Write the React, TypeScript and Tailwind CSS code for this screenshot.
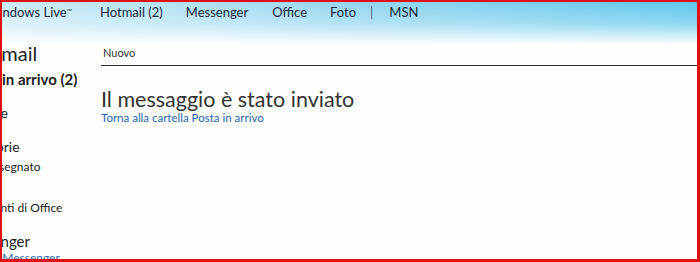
const font = { fontFamily: 'Lato, "Noto Sans", Arial, sans-serif' };

const nav = [
  { label: "Hotmail (2)", gap: "mr-[23px]" },
  { label: "Messenger", gap: "mr-[24px]" },
  { label: "Office", gap: "mr-[23px]" },
  { label: "Foto", gap: "mr-[14px]" },
];

function SideItem({
  text,
  shift,
  className,
}: {
  text: string;
  shift: string;
  className: string;
}) {
  return (
    <div className={`whitespace-nowrap ${shift} ${className}`}>{text}</div>
  );
}

export default function App() {
  return (
    <div
      className="relative h-[262px] w-[700px] overflow-hidden border-b-[3px] border-l-2 border-r-[3px] border-t-2 border-[#e01010] bg-[#fefefe] text-[#222]"
      style={font}
    >
      {/* sky band behind the top bar */}
      <div className="absolute inset-x-0 top-0 h-[48px] bg-[linear-gradient(to_right,#b4e2f6_0%,#9fd9f2_40%,#7ccfee_75%,#5ec6ec_100%)]" />
      <div className="absolute inset-x-0 top-0 h-[48px] bg-[linear-gradient(to_right,rgba(255,255,255,0.3)_0%,rgba(255,255,255,0)_45%)]" />
      <div className="absolute inset-x-0 top-0 h-[48px] bg-[linear-gradient(to_bottom,rgba(255,255,255,0)_0%,rgba(255,255,255,0.3)_45%,rgba(255,255,255,1)_90%)]" />

      <div className="relative">
        <header className="flex h-[26px] items-start text-[13px] leading-[20px] text-[#1c2a3a]">
          <div className="w-[98px] overflow-hidden whitespace-nowrap">
            <span className="-ml-[16px] inline-block">
              Windows Live<sup className="text-[7px]">™</sup>
            </span>
          </div>
          <nav className="flex items-center">
            {nav.map((n) => (
              <span key={n.label} className={n.gap}>
                {n.label}
              </span>
            ))}
            <span className="mr-[16px] text-[#46607a]">|</span>
            <span>MSN</span>
          </nav>
        </header>

        <div className="flex">
          <aside className="w-[75px] shrink-0 overflow-hidden pt-[13px] text-[#222]">
            <SideItem
              text="Hotmail"
              shift="-ml-[34px]"
              className="text-[20px] leading-[24px]"
            />
            <SideItem
              text="Posta in arrivo (2)"
              shift="-ml-[41px]"
              className="mt-[4px] text-[15px] font-bold leading-[20px]"
            />
            <SideItem
              text="Cartelle"
              shift="-ml-[42px]"
              className="mt-[13px] text-[14px] leading-[22px]"
            />
            <SideItem
              text="Categorie"
              shift="-ml-[42px]"
              className="mt-[12px] text-[14px] leading-[22px]"
            />
            <SideItem
              text="Contrassegnato"
              shift="-ml-[44px]"
              className="mt-[0px] text-[12px] leading-[18px]"
            />
            <SideItem
              text="Documenti di Office"
              shift="-ml-[46px]"
              className="mt-[23px] text-[12px] leading-[18px]"
            />
            <SideItem
              text="Messenger"
              shift="-ml-[44px]"
              className="mt-[14px] text-[15px] leading-[20px]"
            />
            <SideItem
              text="Accedi a Messenger"
              shift="-ml-[47px]"
              className="-mt-[1px] text-[12px] leading-[16px] text-[#2a66ad]"
            />
          </aside>

          <main className="ml-[24px] flex-1 pt-[17px]">
            <div className="pl-[2px] text-[11px] leading-[16px] text-[#333]">
              Nuovo
            </div>
            <div className="mt-[4px] h-px bg-[#2a2a2a]" />
            <h1 className="mt-[20px] text-[21.5px] font-normal leading-[26px] text-[#333]">
              Il messaggio è stato inviato
            </h1>
            <a className="-mt-[1px] block text-[11.5px] leading-[14px] text-[#2a66ad]">
              Torna alla cartella Posta in arrivo
            </a>
          </main>
        </div>
      </div>
    </div>
  );
}
